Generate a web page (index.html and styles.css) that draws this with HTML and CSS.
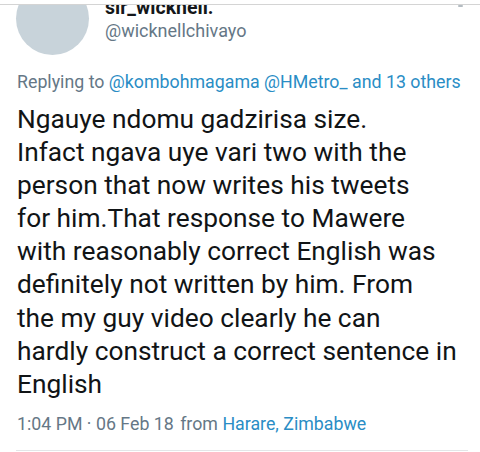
FILE: index.html
```html
<!DOCTYPE html>
<html>
<head>
<meta charset="utf-8">
<link rel="stylesheet" href="styles.css">
</head>
<body>
<div class="tweet">
  <div class="topbar"><span class="chev"></span></div>
  <div class="head">
    <div class="avatar"></div>
    <div class="names">
      <div class="name">sir_wicknell.</div>
      <div class="handle">@wicknellchivayo</div>
    </div>
  </div>
  <div class="reply">Replying to <span class="link">@kombohmagama</span> <span class="link">@HMetro_</span> <span class="link">and 13 others</span></div>
  <div class="body">Ngauye ndomu gadzirisa size.
Infact ngava uye vari two with the
person that now writes his tweets
for him.That response to Mawere
with reasonably correct English was
definitely not written by him. From
the my guy video clearly he can
hardly construct a correct sentence in
English</div>
  <div class="meta">1:04 PM · 06 Feb 18 <span class="from">from</span> <span class="link">Harare, Zimbabwe</span></div>
  <div class="bottomline"></div>
</div>
</body>
</html>
```
FILE: styles.css
```css
html, body { margin: 0; padding: 0; background: #fff; }
body { width: 480px; height: 452px; overflow: hidden; font-family: Roboto, "Noto Sans", sans-serif; }
.tweet { position: relative; display: flow-root; }
.topbar { position: absolute; top: 0; left: 0; right: 0; height: 4px; background: #fff; border-bottom: 1px solid #d4d4d4; z-index: 2; }
.chev { position: absolute; right: 17px; top: 5px; width: 5px; height: 2px; background: #b4bcc2; border-radius: 1px; }
.head { display: flex; align-items: flex-start; margin-top: -18px; padding-left: 16px; }
.avatar { width: 73px; height: 73px; border-radius: 50%; background: #c8d3da; flex: none; }
.names { margin-left: 16px; padding-top: 14.5px; }
.name { font-weight: 700; font-size: 19.5px; color: #14171a; line-height: 22px; }
.handle { font-size: 18px; color: #657786; line-height: 24px; margin-top: 0; }
.reply { padding-left: 17px; margin-top: 16px; font-size: 17.8px; color: #657786; line-height: 22px; white-space: nowrap; }
.link { color: #2a8dc5; }
.body { padding-left: 17px; padding-right: 4px; margin-top: 10px; font-size: 26.3px; line-height: 33.1px; color: #111416; white-space: pre-line; }
.meta { padding-left: 17px; margin-top: 12px; font-size: 17.8px; color: #657786; line-height: 22px; }
.from { margin-left: 2px; }
.bottomline { margin: 15px 12px 0 16px; border-top: 1px solid #e3e6e8; }
```
